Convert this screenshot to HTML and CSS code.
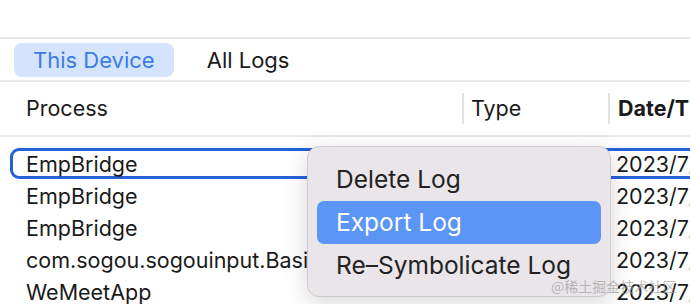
FILE: index.html
```html
<!DOCTYPE html>
<html lang="en">
<head>
  <meta charset="UTF-8" />
  <title>Logs</title>
  <link rel="stylesheet" href="styles.css">
</head>
<body>
  <div class="top-space"></div>
  <div class="tabs">
    <span class="tab active">This Device</span>
    <span class="tab">All Logs</span>
  </div>
  <div class="table">
    <div class="head">
      <div class="col process">Process</div>
      <div class="col type">Type</div>
      <div class="col date">Date/Time</div>
    </div>
    <div class="rows">
      <div class="row selected">
        <div class="col process">EmpBridge</div>
        <div class="col type"></div>
        <div class="col date">2023/7/12 10:21</div>
      </div>
      <div class="row">
        <div class="col process">EmpBridge</div>
        <div class="col type"></div>
        <div class="col date">2023/7/12 10:20</div>
      </div>
      <div class="row">
        <div class="col process">EmpBridge</div>
        <div class="col type"></div>
        <div class="col date">2023/7/11 18:02</div>
      </div>
      <div class="row">
        <div class="col process">com.sogou.sogouinput.BasicIME</div>
        <div class="col type"></div>
        <div class="col date">2023/7/11 09:44</div>
      </div>
      <div class="row">
        <div class="col process">WeMeetApp</div>
        <div class="col type"></div>
        <div class="col date">2023/7/10 15:31</div>
      </div>
    </div>
  </div>

  <div class="menu">
    <div class="item">Delete Log</div>
    <div class="item hover">Export Log</div>
    <div class="item">Re–Symbolicate Log</div>
  </div>

  <div class="watermark">@稀土掘金技术社区</div>
</body>
</html>
```

FILE: styles.css
```css
body {
  margin: 0;
  width: 690px;
  height: 304px;
  overflow: hidden;
  background: #fff;
  font-family: Inter, "Open Sans", sans-serif;
  color: #1a1a1a;
  position: relative;
}
.top-space {
  height: 37px;
  border-bottom: 2px solid #e8e8e8;
}
.tabs {
  display: flex;
  align-items: center;
  gap: 14px;
  height: 41px;
  padding-left: 14px;
  border-bottom: 2px solid #e8e8e8;
}
.tab {
  font-size: 22px;
  padding: 0 19px;
  height: 34px;
  line-height: 34px;
  border-radius: 8px;
}
.tab.active {
  background: #d4e4fc;
  color: #3d7be3;
}
.table {
  width: 760px;
}
.head {
  display: flex;
  align-items: center;
  height: 53px;
  border-bottom: 2px solid #e8e8e8;
  padding-left: 10px;
}
.head .col {
  font-size: 21.5px;
  height: 31px;
  line-height: 31px;
}
.head .type,
.head .date {
  border-left: 2px solid #e2e2e2;
}
.head .date {
  font-weight: 700;
}
.col {
  white-space: nowrap;
  overflow: hidden;
  box-sizing: border-box;
}
.process {
  width: 452px;
  padding-left: 16px;
}
.type {
  width: 146px;
  padding-left: 7px;
}
.date {
  flex: 1;
  padding-left: 8px;
}
.rows {
  padding-top: 11px;
}
.row {
  display: flex;
  align-items: center;
  height: 32px;
  margin-left: 10px;
  font-size: 21.5px;
  box-sizing: border-box;
}
.row.selected {
  border: 3px solid #2761d8;
  border-radius: 9px;
  height: 31px;
  margin-bottom: 1px;
}
.row.selected .process {
  width: 449px;
  padding-left: 13px;
}
.menu {
  position: absolute;
  left: 307px;
  top: 146px;
  width: 304px;
  height: 151px;
  box-sizing: border-box;
  padding: 11px 9px;
  background: #e9e5e9;
  border: 1px solid #cfcccf;
  border-radius: 12px;
  box-shadow: 0 6px 24px rgba(0, 0, 0, 0.16);
}
.item {
  height: 43px;
  line-height: 43px;
  padding-left: 19px;
  font-size: 24.5px;
  color: #222;
  border-radius: 7px;
}
.item.hover {
  background: #5b95f5;
  color: #fff;
}
.watermark {
  position: absolute;
  left: 551px;
  top: 276px;
  font-family: "Noto Sans CJK SC", sans-serif;
  font-size: 14px;
  color: rgba(160, 160, 160, 0.7);
  white-space: nowrap;
}
```
